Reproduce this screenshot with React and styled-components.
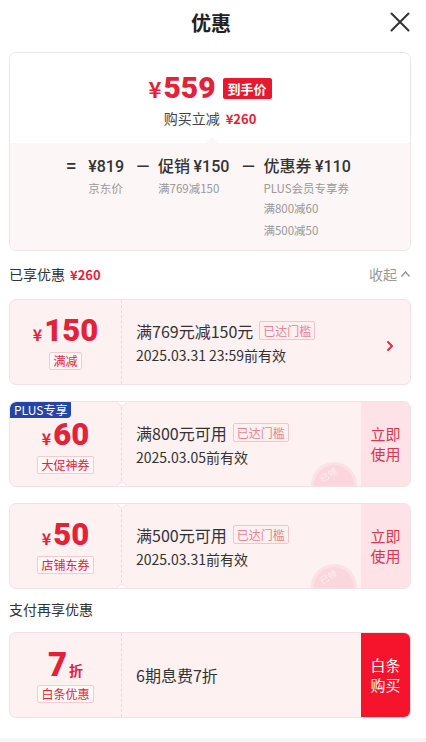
import React from "react";
import styled, { createGlobalStyle } from "styled-components";

const Global = createGlobalStyle`
  html, body { margin: 0; padding: 0; background: #fff; }
  body { font-family: "Noto Sans CJK SC", "Noto Sans", sans-serif; color: #333; }
  * { box-sizing: border-box; }
`;

const Page = styled.div`
  width: 426px;
  height: 742px;
  overflow: hidden;
  display: flex;
  flex-direction: column;
  padding: 0 15px 0 9px;
  position: relative;
`;

const Header = styled.div`
  height: 44px;
  display: flex;
  align-items: center;
  justify-content: center;
  position: relative;
`;

const Title = styled.div`
  font-size: 20px;
  font-weight: 700;
  color: #222;
  padding-left: 2px;
`;

const Close = styled.div`
  position: absolute;
  right: 1px;
  top: 12px;
  width: 20px;
  height: 20px;
`;

const PriceCard = styled.div`
  margin-top: 8px;
  border: 1px solid #f1e4e5;
  border-radius: 7px;
  display: flex;
  flex-direction: column;
`;

const PriceTop = styled.div`
  height: 90px;
  display: flex;
  flex-direction: column;
  align-items: center;
  padding-top: 17px;
  background: #fff;
  border-radius: 7px 7px 0 0;
`;

const PriceLine = styled.div`
  display: flex;
  align-items: center;
  gap: 5px;
  color: #e3223a;
  font-weight: 700;
  height: 36px;
`;

const Yen = styled.span`
  font-size: ${(p) => p.size || 20}px;
  font-weight: 700;
  color: #e3223a;
  margin-right: ${(p) => p.gap || 0}px;
`;

const BigNum = styled.span`
  font-family: "Roboto", "Noto Sans", sans-serif;
  font-size: ${(p) => p.size || 30}px;
  font-weight: 900;
  color: #e3223a;
  line-height: 1;
`;

const RedBadge = styled.span`
  background: #e8192f;
  color: #fff;
  font-size: 13px;
  font-weight: 700;
  padding: 0 5px;
  height: 21px;
  line-height: 21px;
  border-radius: 2px;
  margin-left: 2px;
`;

const SaveLine = styled.div`
  font-size: 14px;
  color: #444;
  margin-top: 2px;
  span { color: #e3223a; font-weight: 600; margin-left: 6px; font-size: 13px; }
`;

const Breakdown = styled.div`
  position: relative;
  background: #fdf6f6;
  border-radius: 0 0 7px 7px;
  padding: 11px 4px 8px 0;
  display: flex;
  justify-content: center;
  gap: 11px;
  &::before {
    content: "";
    position: absolute;
    left: 196px;
    top: -6px;
    border-left: 6px solid transparent;
    border-right: 6px solid transparent;
    border-bottom: 6px solid #fdf6f6;
  }
`;

const Col = styled.div`
  display: flex;
  flex-direction: column;
`;

const Op = styled.div`
  font-size: 16px;
  font-weight: 600;
  color: #333;
  line-height: 22px;
  width: 12px;
  text-align: center;
`;

const MainVal = styled.div`
  font-size: 16px;
  font-weight: 500;
  color: #333;
  line-height: 22px;
  white-space: nowrap;
  b { font-family: "Roboto", sans-serif; font-weight: 500; }
`;

const Sub = styled.div`
  font-size: 11.5px;
  color: #999;
  line-height: ${(p) => p.lh || 20}px;
  white-space: nowrap;
`;

const SectionHead = styled.div`
  display: flex;
  justify-content: space-between;
  align-items: center;
  height: 22px;
  margin-top: ${(p) => p.mt || 13}px;
  margin-bottom: ${(p) => p.mb || 13}px;
`;

const SectionTitle = styled.div`
  font-size: 14px;
  color: #333;
  span { color: #e3223a; font-weight: 600; margin-left: 5px; font-size: 13px; }
`;

const Fold = styled.div`
  font-size: 14px;
  color: #999;
  display: flex;
  align-items: center;
  gap: 3px;
`;

const Coupons = styled.div`
  display: flex;
  flex-direction: column;
  gap: 16px;
`;

const Coupon = styled.div`
  position: relative;
  height: 86px;
  display: flex;
  background: #fdf1f2;
  border: 1px solid #f7e0e3;
  border-radius: 7px;
  overflow: hidden;
`;

const Left = styled.div`
  width: 112px;
  flex-shrink: 0;
  display: flex;
  flex-direction: column;
  align-items: center;
  justify-content: center;
  gap: 5px;
  border-right: 1px dashed #f0d6da;
  padding-top: ${(p) => p.pt || 0}px;
`;

const Amount = styled.div`
  display: flex;
  align-items: baseline;
  height: 32px;
`;

const ZheSmall = styled.span`
  font-size: 14px;
  font-weight: 700;
  color: #e3223a;
  margin-left: 2px;
`;

const Tag = styled.span`
  font-size: 12px;
  color: #e3223a;
  border: 1px solid #f3ccd1;
  background: #fff8f8;
  border-radius: 2px;
  padding: 0 3px;
  line-height: 16px;
`;

const Plus = styled.div`
  position: absolute;
  left: 0;
  top: 0;
  background: #2544a3;
  color: #fff;
  font-size: 12px;
  padding: 0 4px;
  line-height: 16px;
  height: 16px;
  border-radius: 6px 0 4px 0;
`;

const Notch = styled.div`
  position: absolute;
  left: 107px;
  ${(p) => (p.bottom ? "bottom: -6px;" : "top: -6px;")}
  width: 10px;
  height: 10px;
  border-radius: 50%;
  background: #fff;
  border: 1px solid #f7e0e3;
`;

const Middle = styled.div`
  flex: 1;
  display: flex;
  flex-direction: column;
  justify-content: center;
  padding-left: 14px;
  gap: 1px;
  position: relative;
`;

const Cond = styled.div`
  display: flex;
  align-items: center;
  gap: 6px;
  font-size: 16px;
  color: #333;
  line-height: 24px;
`;

const Reached = styled.span`
  font-size: 12px;
  color: #e7848f;
  border: 1px solid #f1c5cb;
  border-radius: 2px;
  padding: 0 3px;
  line-height: 17px;
`;

const Expire = styled.div`
  font-size: 14px;
  color: #333;
  line-height: 22px;
`;

const Action = styled.div`
  width: 49px;
  flex-shrink: 0;
  display: flex;
  align-items: center;
  justify-content: center;
  text-align: center;
  font-size: 15px;
  line-height: 20px;
  background: ${(p) => (p.solid ? "#f5142c" : "#fde2e7")};
  color: ${(p) => (p.solid ? "#fff" : "#d6384d")};
`;

const Arrow = styled.div`
  width: 40px;
  flex-shrink: 0;
  display: flex;
  align-items: center;
  justify-content: center;
  padding-top: 8px;
`;

const Stamp = styled.div`
  position: absolute;
  right: 4px;
  bottom: -22px;
  width: 46px;
  height: 46px;
  border-radius: 50%;
  background: #fbd3da;
  border: 3px solid #fce0e5;
  display: flex;
  align-items: flex-start;
  justify-content: center;
  padding-top: 3px;
  color: #fdeef1;
  font-size: 9px;
  line-height: 12px;
  transform: rotate(-30deg);
  opacity: 0.9;
`;

const BottomBar = styled.div`
  position: absolute;
  left: 0;
  right: 0;
  bottom: 0;
  height: 4px;
  background: #f5f6f7;
`;

function CloseIcon() {
  return (
    <svg width="20" height="20" viewBox="0 0 20 20">
      <path d="M1.5 1.5 L18.5 18.5 M18.5 1.5 L1.5 18.5" stroke="#333" strokeWidth="2" strokeLinecap="round" />
    </svg>
  );
}

function ChevronUp() {
  return (
    <svg width="11" height="8" viewBox="0 0 11 8">
      <path d="M1.5 6.5 L5.5 2 L9.5 6.5" fill="none" stroke="#999" strokeWidth="1.5" />
    </svg>
  );
}

function ChevronRight() {
  return (
    <svg width="8" height="12" viewBox="0 0 8 12">
      <path d="M2 2 L6 6 L2 10" fill="none" stroke="#e3223a" strokeWidth="1.8" strokeLinecap="round" />
    </svg>
  );
}

const coupons = [
  { amt: "150", tag: "满减", cond: "满769元减150元", exp: "2025.03.31 23:59前有效", kind: "arrow" },
  { amt: "60", tag: "大促神券", cond: "满800元可用", exp: "2025.03.05前有效", kind: "use", plus: true },
  { amt: "50", tag: "店铺东券", cond: "满500元可用", exp: "2025.03.31前有效", kind: "use" },
];

export default function App() {
  return (
    <>
      <Global />
      <Page>
        <Header>
          <Title>优惠</Title>
          <Close><CloseIcon /></Close>
        </Header>

        <PriceCard>
          <PriceTop>
            <PriceLine>
              <span>
                <Yen size={22} gap={2}>¥</Yen>
                <BigNum size={30}>559</BigNum>
              </span>
              <RedBadge>到手价</RedBadge>
            </PriceLine>
            <SaveLine>购买立减<span>¥260</span></SaveLine>
          </PriceTop>
          <Breakdown>
            <Op>=</Op>
            <Col>
              <MainVal><b>¥819</b></MainVal>
              <Sub>京东价</Sub>
            </Col>
            <Op>－</Op>
            <Col>
              <MainVal>促销 <b>¥150</b></MainVal>
              <Sub>满769减150</Sub>
            </Col>
            <Op>－</Op>
            <Col>
              <MainVal>优惠券 <b>¥110</b></MainVal>
              <Sub>PLUS会员专享券</Sub>
              <Sub>满800减60</Sub>
              <Sub lh={24}>满500减50</Sub>
            </Col>
          </Breakdown>
        </PriceCard>

        <SectionHead mt={12} mb={14}>
          <SectionTitle>已享优惠<span>¥260</span></SectionTitle>
          <Fold>收起<ChevronUp /></Fold>
        </SectionHead>

        <Coupons>
          {coupons.map((c) => (
            <Coupon key={c.amt}>
              {c.kind === "use" && <Notch />}
              {c.kind === "use" && <Notch bottom />}
              {c.plus && <Plus>PLUS专享</Plus>}
              <Left pt={c.plus ? 4 : 0}>
                <Amount>
                  <Yen size={16} gap={2}>¥</Yen>
                  <BigNum size={31}>{c.amt}</BigNum>
                </Amount>
                <Tag>{c.tag}</Tag>
              </Left>
              <Middle>
                <Cond>{c.cond}<Reached>已达门槛</Reached></Cond>
                <Expire>{c.exp}</Expire>
                {c.kind === "use" && <Stamp>已领</Stamp>}
              </Middle>
              {c.kind === "arrow" ? (
                <Arrow><ChevronRight /></Arrow>
              ) : (
                <Action>立即<br />使用</Action>
              )}
            </Coupon>
          ))}
        </Coupons>

        <SectionHead mt={9} mb={12}>
          <SectionTitle>支付再享优惠</SectionTitle>
        </SectionHead>

        <Coupon>
          <Left>
            <Amount>
              <BigNum size={33}>7</BigNum>
              <ZheSmall>折</ZheSmall>
            </Amount>
            <Tag>白条优惠</Tag>
          </Left>
          <Middle>
            <Cond>6期息费7折</Cond>
          </Middle>
          <Action solid>白条<br />购买</Action>
        </Coupon>
        <BottomBar />
      </Page>
    </>
  );
}
